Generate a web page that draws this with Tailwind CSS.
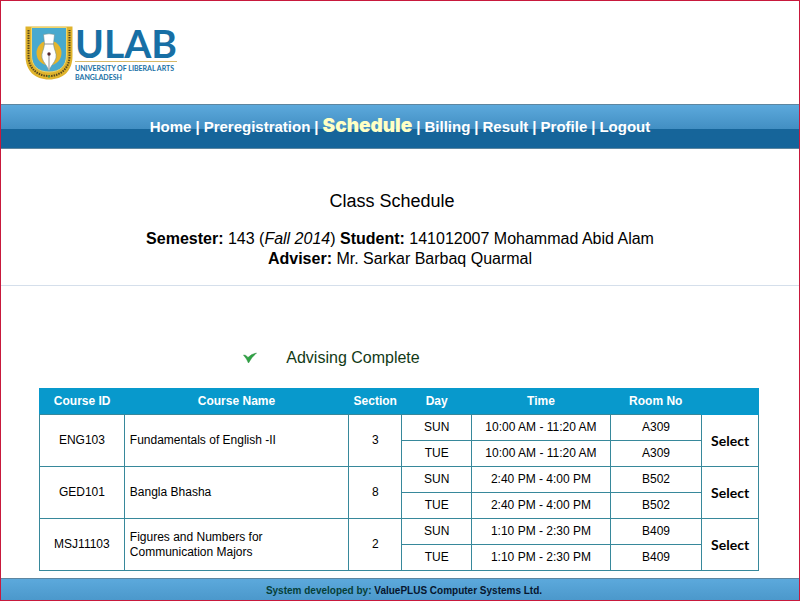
<!DOCTYPE html>
<html lang="en">
<head>
<meta charset="utf-8">
<meta name="viewport" content="width=device-width, initial-scale=1">
<title>ULAB - Class Schedule</title>
<script src="https://cdn.jsdelivr.net/npm/@tailwindcss/browser@4"></script>
</head>
<body class="flex min-h-screen flex-col border border-[#c8193c] bg-white font-['Liberation_Sans',Arial,sans-serif] text-black">
<header class="px-6 pt-6 pb-[22px]">
  <a href="#" aria-label="ULAB home" class="flex items-start">
    <svg class="h-14 w-12 shrink-0" viewBox="0 0 48 56" aria-hidden="true">
      <path d="M.5 1.500H47.500V31C47.500 46 38 54.500 24 54.500S.5 46 .5 31Z" fill="#dfb32c"/>
      <path d="M3.500 5V31C3.500 43 12 51 24 51S44.500 43 44.500 31V5" fill="none" stroke="#57481e" stroke-width="2" stroke-dasharray="1.500 1"/>
      <path d="M6.500 2.500H41.500V30C41.500 41 35 47 24 47S6.500 41 6.500 30Z" fill="#48a9ce" stroke="#f1d568"/>
      <circle cx="24" cy="28" r="12.500" fill="#e6b52c"/>
      <path d="M18.500 9.500Q24 8 29.500 9.500L28.500 19C29 25 32 28 31 33C29.500 38 26 40 24 46C22 40 18.500 38 17 33C16 28 19 25 19.500 19Z" fill="#fff" stroke="#6c8e91" stroke-width=".6"/>
      <path d="M19.500 19H28.500M24 29V44" stroke="#777" stroke-width=".8"/>
      <circle cx="24" cy="29" r="1.700" fill="#542830"/>
      <circle cx="24" cy="51.500" r="1.200" fill="#4e9f48"/>
    </svg>
    <span class="ml-[2px] flex flex-col font-['Lato',sans-serif] text-[#176fa5]">
      <span class="border-b border-[#d6b969] text-[39px] leading-9 font-bold">ULAB</span>
      <span class="flex flex-col pt-[2px] text-[7px] leading-[9px] font-bold"><span>UNIVERSITY OF LIBERAL ARTS</span><span>BANGLADESH</span></span>
    </span>
  </a>
</header>
<nav aria-label="Main" class="flex h-[45px] items-center justify-center border-y border-[#5d86a0] bg-linear-to-b from-[#5ca9dc] via-[#428fc3] via-55% to-[#16659a] to-55% text-[15px] font-bold text-white">
  <div class="flex items-baseline gap-1 whitespace-nowrap">
    <a href="#">Home</a><span>|</span>
    <a href="#">Preregistration</a><span>|</span>
    <a href="#" aria-current="page" class="font-['Inter',sans-serif] text-[19px] leading-6 font-black text-[#ffffc4]">Schedule</a><span>|</span>
    <a href="#">Billing</a><span>|</span>
    <a href="#">Result</a><span>|</span>
    <a href="#">Profile</a><span>|</span>
    <a href="#">Logout</a>
  </div>
</nav>
<main class="flex-1">
  <section class="border-b border-[#d5dfeb] px-4 pt-10 pb-4 text-center">
    <h1 class="mb-4 pr-4 text-lg leading-6">Class Schedule</h1>
    <p class="leading-5"><b>Semester:</b> 143 (<i>Fall 2014</i>) <b>Student:</b> 141012007 Mohammad Abid Alam</p>
    <p class="leading-5"><b>Adviser:</b> Mr. Sarkar Barbaq Quarmal</p>
  </section>
  <section class="pt-[60px] pr-10 pb-[7px] pl-[38px]">
    <p class="mb-[18px] flex items-center justify-center gap-7 pr-[136px] leading-6 text-[#123a16]">
      <svg class="h-[14px] w-4" viewBox="0 0 16 14" aria-hidden="true"><path d="M1.500 4Q4 3.500 6 6.500Q9 3 14.500 2Q9.500 6 6.500 12Q5 8 1.500 4Z" fill="#2fa344" stroke="#268b39" stroke-width=".5"/></svg>
      Advising Complete
    </p>
    <table class="w-full table-fixed border-collapse text-center text-xs leading-[15px] [&_td]:border [&_td]:border-[#37889b] [&_td]:p-0 [&_tr]:h-[26px]">
      <colgroup><col class="w-[11.8%]"><col class="w-[31.2%]"><col class="w-[7.4%]"><col class="w-[9.7%]"><col class="w-[19.3%]"><col class="w-[12.7%]"><col class="w-[7.9%]"></colgroup>
      <thead class="border border-[#0899cc] bg-[#0899cc] text-white">
        <tr><th scope="col">Course ID</th><th scope="col">Course Name</th><th scope="col">Section</th><th scope="col">Day</th><th scope="col">Time</th><th scope="col">Room No</th><td class="border-[#0899cc]!"></td></tr>
      </thead>
      <tbody>
        <tr><td rowspan="2">ENG103</td><td rowspan="2" class="text-left"><div class="px-[5px]">Fundamentals of English -II</div></td><td rowspan="2">3</td><td>SUN</td><td>10:00 AM - 11:20 AM</td><td>A309</td><td rowspan="2"><a href="#" class="font-['Lato',sans-serif] text-sm font-bold">Select</a></td></tr>
        <tr><td>TUE</td><td>10:00 AM - 11:20 AM</td><td>A309</td></tr>
        <tr><td rowspan="2">GED101</td><td rowspan="2" class="text-left"><div class="px-[5px]">Bangla Bhasha</div></td><td rowspan="2">8</td><td>SUN</td><td>2:40 PM - 4:00 PM</td><td>B502</td><td rowspan="2"><a href="#" class="font-['Lato',sans-serif] text-sm font-bold">Select</a></td></tr>
        <tr><td>TUE</td><td>2:40 PM - 4:00 PM</td><td>B502</td></tr>
        <tr><td rowspan="2">MSJ11103</td><td rowspan="2" class="text-left"><div class="px-[5px]">Figures and Numbers for<br>Communication Majors</div></td><td rowspan="2">2</td><td>SUN</td><td>1:10 PM - 2:30 PM</td><td>B409</td><td rowspan="2"><a href="#" class="font-['Lato',sans-serif] text-sm font-bold">Select</a></td></tr>
        <tr><td>TUE</td><td>1:10 PM - 2:30 PM</td><td>B409</td></tr>
      </tbody>
    </table>
  </section>
</main>
<footer class="h-[22px] border-t border-[#5d86a0] bg-linear-to-b from-[#5ca9dc] to-[#4b98cb] pl-2 text-center text-[10px] leading-6 font-bold text-[#06162e]"><span class="text-[#063f38]">System developed by:</span> ValuePLUS Computer Systems Ltd.</footer>
</body>
</html>
